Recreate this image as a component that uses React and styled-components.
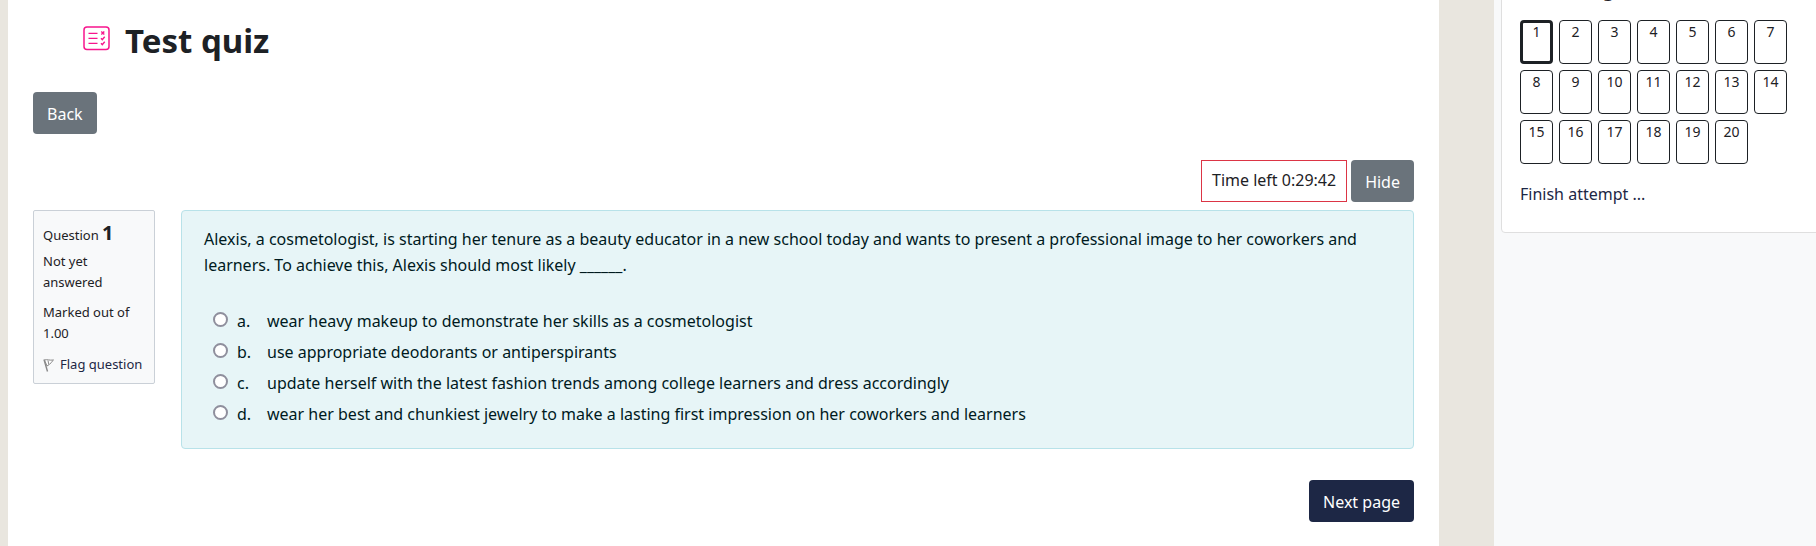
import React, { useState } from "react";
import styled, { createGlobalStyle, ThemeProvider } from "styled-components";

const theme = {
  colors: {
    primary: "#1d2745",
    secondary: "#6a737b",
    text: "#1d2125",
    link: "#1d2745",
    page: "#e9e6df",
    surface: "#ffffff",
    light: "#f8f9fa",
    question: "#e7f5f7",
    questionBorder: "#b8e2e9",
    questionText: "#001a1e",
    danger: "#dc3545",
    accent: "#f7158d",
  },
};

const GlobalStyle = createGlobalStyle`
  * {
    box-sizing: border-box;
  }

  body {
    margin: 0;
    font-family: "Noto Sans", "Open Sans", sans-serif;
    font-size: 16px;
    line-height: 26px;
    background-color: #e9e6df;
  }
`;

const Page = styled.div`
  display: flex;
  min-height: 100vh;
  padding-left: 8px;
  overflow: hidden;
  color: ${(props) => props.theme.colors.text};
  background-color: ${(props) => props.theme.colors.page};
`;

const Main = styled.main`
  flex: 1;
  min-width: 0;
  padding: 17px 25px 24px;
  background-color: ${(props) => props.theme.colors.surface};
`;

const Header = styled.header`
  display: flex;
  align-items: center;
  gap: 15px;
  height: 48px;
  padding-left: 50px;

  svg {
    display: block;
    margin-bottom: 6px;
  }
`;

const Title = styled.h1`
  margin: 0;
  font-size: 33px;
  line-height: 48px;
  font-weight: 700;
`;

const Button = styled.button`
  height: 42px;
  padding: 2px 14px 0;
  border: 0;
  border-radius: 4px;
  font: inherit;
  color: #ffffff;
  background-color: ${(props) =>
    props.$primary
      ? props.theme.colors.primary
      : props.theme.colors.secondary};
  cursor: pointer;
`;

const BackBar = styled.div`
  display: flex;
  padding: 27px 0 26px;
`;

const TimerBar = styled.div`
  display: flex;
  justify-content: flex-end;
  gap: 4px;
  padding-bottom: 8px;
`;

const Timer = styled.div`
  height: 42px;
  padding: 6px 10px;
  border: 1px solid ${(props) => props.theme.colors.danger};
`;

const Question = styled.div`
  display: flex;
  align-items: flex-start;
  gap: 26px;
`;

const Info = styled.aside`
  flex: none;
  width: 122px;
  padding: 8px 9px;
  border: 1px solid #cad0d7;
  border-radius: 2px;
  font-size: 13px;
  line-height: 21px;
  background-color: ${(props) => props.theme.colors.light};
`;

const QuestionNumber = styled.h3`
  margin: 0 0 2px;
  font-size: 13px;
  line-height: 28px;
  font-weight: 400;

  span {
    font-size: 20px;
    font-weight: 700;
  }
`;

const InfoText = styled.div`
  margin-bottom: 9px;
`;

const FlagLink = styled.a`
  display: flex;
  align-items: center;
  gap: 5px;
  margin-top: 10px;
  white-space: nowrap;
  color: ${(props) => props.theme.colors.link};
  text-decoration: none;
`;

const Formulation = styled.div`
  flex: 1;
  min-width: 0;
  padding: 15px 22px 21px;
  border: 1px solid ${(props) => props.theme.colors.questionBorder};
  border-radius: 4px;
  color: ${(props) => props.theme.colors.questionText};
  background-color: ${(props) => props.theme.colors.question};
`;

const QuestionText = styled.p`
  margin: 0 0 30px;
`;

const Answers = styled.fieldset`
  display: grid;
  gap: 5px;
  margin: 0;
  padding: 0 0 0 9px;
  border: 0;
`;

const Answer = styled.label`
  display: grid;
  grid-template-columns: 24px 30px 1fr;
`;

const Radio = styled.input`
  appearance: none;
  width: 15px;
  height: 15px;
  margin: 4px 0 0;
  border: 2px solid #8f8f9d;
  border-radius: 50%;
  background-color: #ffffff;

  &:checked {
    border-color: ${(props) => props.theme.colors.primary};
    border-width: 4px;
  }
`;

const SubmitBar = styled.div`
  display: flex;
  justify-content: flex-end;
  padding-top: 31px;
`;

const Drawer = styled.aside`
  flex: none;
  width: 322px;
  margin-left: 55px;
  padding-left: 7px;
  background-color: ${(props) => props.theme.colors.light};
`;

const Block = styled.section`
  margin: -42px -8px 0 0;
  padding: 18px 18px 25px;
  border: 1px solid #dfdfdf;
  border-radius: 4px;
  background-color: ${(props) => props.theme.colors.surface};
`;

const BlockTitle = styled.h2`
  margin: 0 0 17px;
  font-size: 18px;
  line-height: 26px;
  font-weight: 700;
`;

const NavGrid = styled.nav`
  display: grid;
  grid-template-columns: repeat(7, 33px);
  gap: 6px;
`;

const NavLink = styled.a`
  height: 44px;
  padding-top: ${(props) => (props.$current ? "0" : "2px")};
  border: ${(props) => (props.$current ? "3px" : "1px")} solid
    ${(props) => props.theme.colors.text};
  border-radius: 4px;
  font-size: 14px;
  line-height: 18px;
  text-align: center;
  text-decoration: none;
  color: ${(props) => props.theme.colors.text};
`;

const FinishLink = styled.a`
  display: block;
  margin-top: 17px;
  text-decoration: none;
  color: ${(props) => props.theme.colors.link};
`;

const QuizIcon = () => (
  <svg width="27" height="25" viewBox="0 0 27 25" fill="none" stroke={theme.colors.accent}>
    <rect x="1" y="1" width="25" height="22.5" rx="3" strokeWidth="1.5" />
    <path d="M5.5 7.3h9M5.5 12.3h9M5.5 17.3h9" strokeWidth="1.3" />
    <path d="M18.3 5.6l3 3M21.3 5.6l-3 3" strokeWidth="1.4" />
    <path d="M18 12.3l1.3 1.3 2.4-2.8M18 17.3l1.3 1.3 2.4-2.8" strokeWidth="1.4" />
  </svg>
);

const FlagIcon = () => (
  <svg width="12" height="14" viewBox="0 0 12 14" fill="none" stroke="#888888">
    <path d="M1 1.5l3.5 12" strokeWidth="1.4" />
    <path d="M1.5 2c2.5-1 5 .7 9 0C8.5 3.5 8 6 4 8z" fill="#ffffff" />
    <path d="M5 2.5l.8 4" />
  </svg>
);

const answers = [
  "wear heavy makeup to demonstrate her skills as a cosmetologist",
  "use appropriate deodorants or antiperspirants",
  "update herself with the latest fashion trends among college learners and dress accordingly",
  "wear her best and chunkiest jewelry to make a lasting first impression on her coworkers and learners",
];

const pages = Array.from({ length: 20 }, (_, i) => i + 1);

const App = () => {
  const [answer, setAnswer] = useState(null);

  return (
    <ThemeProvider theme={theme}>
      <GlobalStyle />
      <Page>
        <Main>
          <Header>
            <QuizIcon />
            <Title>Test quiz</Title>
          </Header>
          <BackBar>
            <Button type="button">Back</Button>
          </BackBar>
          <TimerBar>
            <Timer role="timer">Time left 0:29:42</Timer>
            <Button type="button">Hide</Button>
          </TimerBar>
          <Question>
            <Info>
              <QuestionNumber>
                Question <span>1</span>
              </QuestionNumber>
              <InfoText>Not yet answered</InfoText>
              <InfoText>Marked out of 1.00</InfoText>
              <FlagLink href="#flag">
                <FlagIcon />
                Flag question
              </FlagLink>
            </Info>
            <Formulation>
              <QuestionText id="question-text">
                Alexis, a cosmetologist, is starting her tenure as a beauty
                educator in a new school today and wants to present a
                professional image to her coworkers and learners. To achieve
                this, Alexis should most likely ______.
              </QuestionText>
              <Answers aria-labelledby="question-text">
                {answers.map((text, i) => (
                  <Answer key={text}>
                    <Radio
                      type="radio"
                      name="answer"
                      checked={answer === i}
                      onChange={() => setAnswer(i)}
                    />
                    <span>{"abcd"[i]}.</span>
                    <span>{text}</span>
                  </Answer>
                ))}
              </Answers>
            </Formulation>
          </Question>
          <SubmitBar>
            <Button type="button" $primary>
              Next page
            </Button>
          </SubmitBar>
        </Main>
        <Drawer>
          <Block>
            <BlockTitle>Quiz navigation</BlockTitle>
            <NavGrid aria-label="Quiz navigation">
              {pages.map((page) => (
                <NavLink key={page} href={"#" + page} $current={page === 1}>
                  {page}
                </NavLink>
              ))}
            </NavGrid>
            <FinishLink href="#finish">Finish attempt ...</FinishLink>
          </Block>
        </Drawer>
      </Page>
    </ThemeProvider>
  );
};

export default App;
